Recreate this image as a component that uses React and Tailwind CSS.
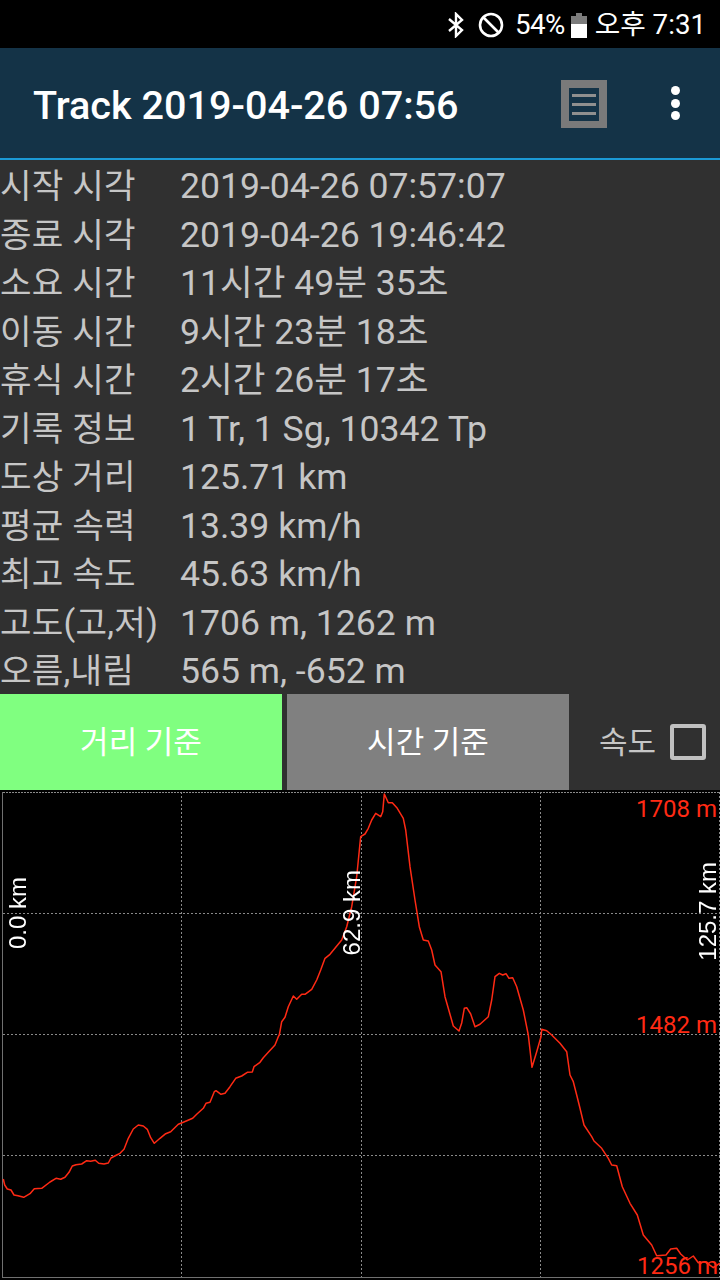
const rows = [
  ["시작 시각", "2019-04-26 07:57:07"],
  ["종료 시각", "2019-04-26 19:46:42"],
  ["소요 시간", "11시간 49분 35초"],
  ["이동 시간", "9시간 23분 18초"],
  ["휴식 시간", "2시간 26분 17초"],
  ["기록 정보", "1 Tr, 1 Sg, 10342 Tp"],
  ["도상 거리", "125.71 km"],
  ["평균 속력", "13.39 km/h"],
  ["최고 속도", "45.63 km/h"],
  ["고도(고,저)", "1706 m, 1262 m"],
  ["오름,내림", "565 m, -652 m"],
];

const CHART_TOP = 790;
const raw = "3.3,1179 4.7,1185 7.3,1189 11,1190 14,1195 18,1195.7 23.7,1197.3 30,1193.7 34.3,1188.7 41.7,1188.3 50,1182 56,1178.3 60.7,1179.3 65,1177.3 69,1172.3 72.3,1166 76,1164.7 81.7,1164 86.7,1160.7 90.7,1161.3 95.3,1160.3 98.7,1163.3 104,1164 108.3,1163 111,1158 116.7,1155 120,1153.3 124,1149.3 128.3,1138.3 133.3,1129 138.3,1125 143.3,1126 147.3,1129.3 150.7,1137.7 154.3,1143.3 160,1138.3 165.7,1133.7 170.7,1131.7 178.3,1124.3 183.3,1122.3 192.7,1118.3 196.7,1114.3 203.3,1108.3 206,1103.3 210,1102.3 214.3,1091.7 216,1090.7 221,1094.3 225,1093.3 230,1086.7 235.7,1078.3 241.7,1076 247.3,1072.3 252.3,1072 254,1066.7 260,1062.3 263.3,1057.7 268.3,1052.3 275,1045 278.3,1036.7 279.3,1035 281.7,1021.7 285,1017.3 288.3,1006.7 293.3,996 296.7,999.3 301.7,994.3 305,994.3 311.7,989.3 316.7,980 320.7,970 325,958.3 330,954.3 341.7,940 346.7,926.7 351.7,906.7 356.7,876.7 360,843.3 360.7,836.7 365,834 368.3,828.3 371.7,820 375.7,813.3 380.7,816.7 382.7,811.7 384.3,794 388.3,802.7 392.3,802.7 397.3,808.3 403.3,818.3 405.7,830 410,866.7 415,900 419.3,926.7 423.3,940 428.3,941 431.7,950 435,965 441,971.7 445,996.7 450.7,1016.7 453.3,1026 459,1031 461.7,1023 464.3,1008.3 466.7,1007.7 470.7,1014 475,1026.7 480,1024.3 488.3,1016.7 491.7,1000 495,976.7 499.3,973.3 502.7,975 506,973.7 509,978.3 512.7,977.7 516.7,986.7 523.3,1010 528.3,1035 532,1067.3 536.7,1051.7 541,1036.7 541.7,1029.3 546.7,1030.7 551.7,1035 560,1043.3 566.7,1051.7 570,1075 573.3,1081.7 576.7,1095 580,1108.3 584,1125 591.7,1136.7 594,1141 601.7,1148.3 608.3,1158.3 611.7,1165 616.7,1165.7 622.3,1186.7 630,1203.3 637.3,1215 643.3,1235 651.7,1245 656.7,1255.7 666,1255 670.7,1249 676.7,1248.3 680.7,1254 687.3,1260 693.3,1256 698.3,1262.7 705,1261.7 713.3,1267.7 720,1263";
const points = raw
  .split(" ")
  .map((p) => {
    const [x, y] = p.split(",").map(Number);
    return `${x},${(y - CHART_TOP).toFixed(1)}`;
  })
  .join(" ");

const koFont = "font-['Roboto','Noto_Sans_CJK_KR',sans-serif]";

function Chart() {
  const grid = "#8a8a8a";
  return (
    <svg className="absolute inset-0" width="720" height="490" viewBox="0 0 720 490">
      {[123.5, 244.5, 365.5].map((y) => (
        <line key={y} x1="3" x2="720" y1={y} y2={y} stroke={grid} strokeWidth="1" strokeDasharray="2 2" />
      ))}
      <line x1="3" x2="720" y1="2.5" y2="2.5" stroke={grid} strokeDasharray="2 1" />
      {[181.5, 361.5, 540.5, 719.5].map((x) => (
        <line key={x} x1={x} x2={x} y1="2" y2="487" stroke={grid} strokeWidth="1" strokeDasharray="2 2" />
      ))}
      <line x1="2.5" x2="2.5" y1="2" y2="488" stroke="#707070" />
      <line x1="2" x2="720" y1="487.5" y2="487.5" stroke="#707070" />
      <polyline points={points} fill="none" stroke="#ff2a14" strokeWidth="1.5" strokeLinejoin="round" />
    </svg>
  );
}

function VLabel({ className, children }) {
  return (
    <span
      className={`absolute [writing-mode:vertical-rl] rotate-180 whitespace-nowrap text-[24px] leading-[22px] text-white font-['Liberation_Sans',sans-serif] ${className}`}
    >
      {children}
    </span>
  );
}

function RedLabel({ className, children }) {
  return (
    <span
      className={`absolute right-0 whitespace-nowrap text-[24px] leading-[28px] text-[#ff2a14] font-['Roboto',sans-serif] ${className}`}
    >
      {children}
    </span>
  );
}

export default function App() {
  return (
    <div className={`w-[720px] h-[1280px] overflow-hidden flex flex-col bg-[#303030] ${koFont}`}>
      <div className="h-[48px] bg-black flex items-center justify-end pr-[14px] pt-[2px] text-white text-[27.7px]">
        <svg width="18" height="26" viewBox="0 0 18 26" fill="none" stroke="white" strokeWidth="2.4" className="mr-[13px]">
          <path d="M2 7 L15 18 L9 24 V2 L15 8 L2 19" />
        </svg>
        <svg width="26" height="26" viewBox="0 0 26 26" fill="none" stroke="white" strokeWidth="2.6" className="mr-[11px]">
          <circle cx="13" cy="13" r="11" />
          <path d="M5.5 5.5 L20.5 20.5" />
        </svg>
        <span className="tracking-[-0.5px] mr-[6px]">54%</span>
        <svg width="16" height="25" viewBox="0 0 16 25" className="mr-[8px]">
          <path d="M5 0 H11 V3 H16 V11 H0 V3 H5 Z" fill="#7c7c7c" />
          <rect x="0" y="11" width="16" height="14" fill="white" />
        </svg>
        <span>오후 7:31</span>
      </div>

      <div className="h-[110px] bg-[#143347] flex items-center pl-[33px]">
        <span className="w-[528px] pt-[5px] text-[39.6px] font-medium text-white whitespace-nowrap">Track 2019-04-26 07:56</span>
        <div className="mt-[2px] w-[46px] h-[48px] bg-[#7a7a7a] flex items-center justify-center blur-[0.6px]">
          <div className="w-[30px] h-[33px] bg-[#143347] flex flex-col justify-center gap-[6px] px-[3px]">
            <div className="h-[3px] bg-[#8f8f8f]" />
            <div className="h-[3px] bg-[#8f8f8f]" />
            <div className="h-[3px] bg-[#8f8f8f]" />
          </div>
        </div>
        <div className="ml-[64px] flex flex-col gap-[3.5px]">
          <div className="w-[9px] h-[9px] rounded-full bg-white" />
          <div className="w-[9px] h-[9px] rounded-full bg-white" />
          <div className="w-[9px] h-[9px] rounded-full bg-white" />
        </div>
      </div>
      <div className="h-[2px] bg-[#1b9ad6]" />

      <div className="flex flex-col">
        {rows.map(([k, v]) => (
          <div key={k} className="h-[48.5px] pt-[5px] flex items-center text-[#c6c6c6] whitespace-nowrap">
            <span className="w-[180px] text-[34.3px] tracking-[0.2px]">{k}</span>
            <span className="text-[35.6px]">{v}</span>
          </div>
        ))}
      </div>

      <div className="h-[96.5px] flex">
        <div className="w-[282px] pt-[3px] bg-[#80ff80] flex items-center justify-center text-[31px] text-white">거리 기준</div>
        <div className="ml-[5px] w-[282px] pt-[3px] bg-[#808080] flex items-center justify-center text-[31px] text-white">시간 기준</div>
        <div className="ml-[30px] flex items-center text-[#c6c6c6] text-[31px]">
          <span className="pt-[3px]">속도</span>
          <div className="ml-[14px] w-[36px] h-[36px] rounded-[3px] border-[4px] border-[#c0c0c0]" />
        </div>
      </div>

      <div className="relative flex-1 bg-black overflow-hidden">
        <Chart />
        <VLabel className="left-[7px] top-[87px]">0.0 km</VLabel>
        <VLabel className="left-[341px] top-[80px]">62.9 km</VLabel>
        <VLabel className="left-[697px] top-[72px]">125.7 km</VLabel>
        <RedLabel className="top-[5px] pr-[3px]">1708 m</RedLabel>
        <RedLabel className="top-[221px] pr-[3px]">1482 m</RedLabel>
        <RedLabel className="top-[462px] left-[637px] right-auto">1256 m</RedLabel>
      </div>
    </div>
  );
}
